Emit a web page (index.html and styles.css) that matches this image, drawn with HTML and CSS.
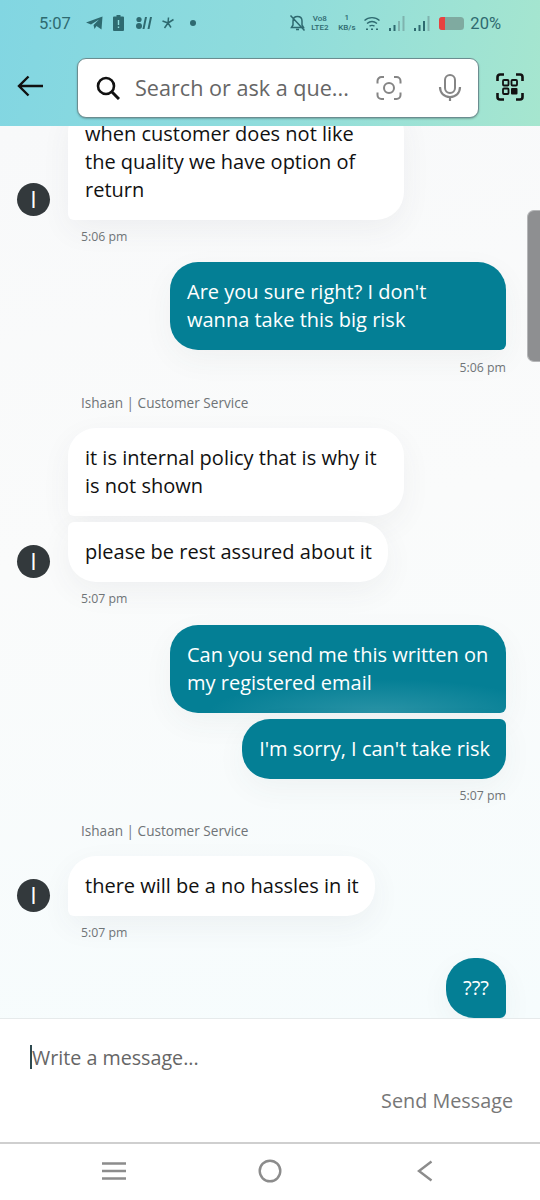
FILE: index.html
```html
<!DOCTYPE html>
<html lang="en">
<head>
<meta charset="utf-8">
<title>Customer Service Chat</title>
<link rel="stylesheet" href="styles.css">
</head>
<body>
<div class="app">
  <header class="top">
    <div class="status">
      <div class="status-left">
        <span class="clock">5:07</span>
        <svg class="ic-tg" width="17" height="14" viewBox="0 0 17 14"><path d="M0 6.500 16.500.5 15.500 13.500 10.500 10 8.500 13 7.500 9 13 3.500 5 8.500Z" fill="#2e6a70"/></svg>
        <svg class="ic-bat" width="11" height="16" viewBox="0 0 11 16"><path d="M3.500 0h4v1.500H10a1 1 0 0 1 1 1V15a1 1 0 0 1-1 1H1a1 1 0 0 1-1-1V2.500a1 1 0 0 1 1-1h2.500Z" fill="#2e6a70"/><path d="M4.800 5h1.400v5H4.800ZM4.800 11.500h1.400V13H4.800Z" fill="#8fdcdc"/></svg>
        <svg class="ic-sim" width="16" height="14" viewBox="0 0 16 14"><circle cx="3" cy="3.500" r="2.600" fill="#2e6a70"/><circle cx="3" cy="10" r="3" fill="#2e6a70"/><path d="M9 1h2L8.500 13h-2ZM14 1h2l-2.500 12h-2Z" fill="#2e6a70"/></svg>
        <svg class="ic-star" width="12" height="12" viewBox="0 0 12 12"><path d="M6 6 11.500 2.500M6 6 .5 4M6 6 2.500 11M6 6 9 10.500M6 6 6.500 .5" stroke="#2e6a70" stroke-width="1.500" fill="none"/></svg>
        <span class="dot"></span>
      </div>
      <div class="status-right">
        <svg class="ic-mute" width="17" height="16" viewBox="0 0 17 16"><path d="M8.500 1.500c-3 0-4.500 2-4.500 4.500v4L2.500 12.500h12L13 10V6c0-2.500-1.500-4.500-4.500-4.500ZM7 14.500h3M1.500.5l14 15" stroke="#2e6a70" stroke-width="1.500" fill="none"/></svg>
        <span class="tiny vo">Vo8<br>LTE2</span>
        <span class="tiny kb">1<br>KB/s</span>
        <svg class="ic-wifi" width="16" height="14" viewBox="0 0 16 14"><path d="M.5 4.500C4.500.7 11.500.7 15.500 4.500M3 7.500c3-2.500 7-2.500 10 0M5.500 10.200c1.500-1 3.500-1 5 0" stroke="#2e6a70" stroke-width="1.400" fill="none"/><path d="M2 12.500h2v1.500H2ZM7 12.500h2v1.500H7ZM12 12.500h2v1.500h-2Z" fill="#2e6a70"/></svg>
        <svg class="ic-sig" width="16" height="15" viewBox="0 0 16 15"><path d="M0 12h2v3H0ZM4.500 9h2v6h-2Z" fill="#2e6a70"/><path d="M9 5h2v10H9ZM13.500 0h2v15h-2Z" fill="#7fb3ae"/></svg>
        <svg class="ic-sig2" width="16" height="15" viewBox="0 0 16 15"><path d="M0 12h2v3H0ZM4.500 9h2v6h-2ZM9 5h2v10H9Z" fill="#2e6a70"/><path d="M13.500 0h2v15h-2Z" fill="#7fb3ae"/></svg>
        <svg class="ic-level" width="25" height="13" viewBox="0 0 25 13"><rect width="25" height="13" rx="3.500" fill="#7faaa0"/><path d="M3 0h3v13H3a3 3 0 0 1-3-3V3a3 3 0 0 1 3-3Z" fill="#e8413f"/></svg>
        <span class="percent">20%</span>
      </div>
    </div>
    <div class="searchbar">
      <svg class="ic-back" width="27" height="22" viewBox="0 0 27 22"><path d="M26 11H2M11.500 1.500 2 11l9.500 9.500" stroke="#111" stroke-width="2.400" fill="none"/></svg>
      <div class="search">
        <svg class="ic-search" width="24" height="24" viewBox="0 0 24 24"><circle cx="10" cy="10" r="8" stroke="#111" stroke-width="2.600" fill="none"/><path d="m16 16 7 7" stroke="#111" stroke-width="3" fill="none"/></svg>
        <span class="placeholder">Search or ask a que...</span>
        <svg class="ic-lens" width="26" height="26" viewBox="0 0 26 26"><path d="M8 2H5.500A4 4 0 0 0 1.500 6v2.500M18 2h2.500a4 4 0 0 1 4 4v2.500M8 24H5.500a4 4 0 0 1-4-4v-2.500M18 24h2.500a4 4 0 0 0 4-4v-2.500" stroke="#858585" stroke-width="2" fill="none"/><circle cx="13" cy="13" r="5" stroke="#858585" stroke-width="2" fill="none"/></svg>
        <svg class="ic-mic" width="24" height="28" viewBox="0 0 24 28"><rect x="7" y="1" width="10" height="18" rx="5" stroke="#858585" stroke-width="2" fill="none"/><path d="M2 13c0 6 4 10 10 10s10-4 10-10M12 23v4" stroke="#858585" stroke-width="2.200" fill="none"/></svg>
      </div>
      <svg class="ic-qr" width="28" height="28" viewBox="0 0 28 28"><path d="M1.500 8V4a2.500 2.500 0 0 1 2.500-2.500h4M20 1.500h4A2.500 2.500 0 0 1 26.500 4v4M1.500 20v4A2.500 2.500 0 0 0 4 26.500h4M20 26.500h4a2.500 2.500 0 0 0 2.500-2.500v-4" stroke="#111" stroke-width="2.600" fill="none"/><rect x="7" y="7" width="5.500" height="5.500" rx="1" stroke="#111" stroke-width="1.800" fill="none"/><rect x="15.500" y="7" width="5.500" height="5.500" rx="1" stroke="#111" stroke-width="1.800" fill="none"/><rect x="7" y="15.500" width="5.500" height="5.500" rx="1" stroke="#111" stroke-width="1.800" fill="none"/><rect x="15" y="15" width="6.500" height="6.500" rx="1" fill="#111"/></svg>
    </div>
  </header>

  <main class="chat">
    <div class="scrollthumb"></div>

    <div class="row">
      <span class="avatar">I</span>
      <div class="bubble in first wide">when customer does not like<br>the quality we have option of<br>return</div>
    </div>
    <div class="time in-time t1">5:06 pm</div>

    <div class="bubble out first wide gap-18">Are you sure right? I don't<br>wanna take this big risk</div>
    <div class="time out-time t2">5:06 pm</div>

    <div class="name">Ishaan | Customer Service</div>
    <div class="row indent">
      <div class="bubble in first wide">it is internal policy that is why it<br>is not shown</div>
    </div>
    <div class="row stack">
      <span class="avatar">I</span>
      <div class="bubble in last">please be rest assured about it</div>
    </div>
    <div class="time in-time t1">5:07 pm</div>

    <div class="bubble out first wide glow gap-19">Can you send me this written on<br>my registered email</div>
    <div class="bubble out last stack">I'm sorry, I can't take risk</div>
    <div class="time out-time t1">5:07 pm</div>

    <div class="name">Ishaan | Customer Service</div>
    <div class="row">
      <span class="avatar">I</span>
      <div class="bubble in first">there will be a no hassles in it</div>
    </div>
    <div class="time in-time t1">5:07 pm</div>

    <div class="bubble out first gap-18 short">???</div>
  </main>

  <section class="composer">
    <div class="input"><span class="caret"></span><span class="hint">Write a message...</span></div>
    <div class="send">Send Message</div>
  </section>

  <nav class="nav">
    <svg width="26" height="20" viewBox="0 0 26 20"><path d="M1 2.500h24M1 10h24M1 17.500h24" stroke="#8c8c8c" stroke-width="2.600" fill="none"/></svg>
    <svg class="ic-home" width="24" height="24" viewBox="0 0 24 24"><circle cx="12" cy="12" r="10.300" stroke="#8c8c8c" stroke-width="2.400" fill="none"/></svg>
    <svg width="16" height="22" viewBox="0 0 16 22"><path d="M14.500 1.500 2 11l12.500 9.500" stroke="#8c8c8c" stroke-width="2.400" fill="none"/></svg>
  </nav>
</div>
</body>
</html>
```
FILE: styles.css
```css
* { box-sizing: border-box; }
html, body { margin: 0; padding: 0; }
body { font-family: "Open Sans", "Noto Sans", sans-serif; background: #fff; }
.app { width: 540px; height: 1200px; display: flex; flex-direction: column; overflow: hidden; }

.top { height: 126px; flex: none; background: linear-gradient(100deg, #82d6e2 0%, #8fdcdc 50%, #a6e6cf 100%); display: flex; flex-direction: column; }
.status { height: 59px; display: flex; justify-content: space-between; padding: 14px 39px 0 39px; color: #2e6a70; }
.status-left, .status-right { display: flex; align-items: center; height: 18px; }
.clock { font-family: "Roboto", sans-serif; font-size: 16.500px; width: 32px; margin-right: 15px; }
.ic-bat { margin-left: 10px; }
.ic-sim { margin-left: 12px; }
.ic-star { margin-left: 10px; }
.dot { width: 6px; height: 6px; border-radius: 50%; background: #2e6a70; margin-left: 16px; }
.ic-mute { margin-right: 4px; }
.tiny { font-family: "Roboto", sans-serif; font-size: 8px; line-height: 9px; font-weight: 500; text-align: center; }
.vo { width: 19px; }
.kb { width: 21px; margin-left: 7px; line-height: 10px; }
.ic-wifi { margin-left: 7px; }
.ic-sig { margin-left: 9px; }
.ic-sig2 { margin-left: 9px; }
.ic-level { margin-left: 9px; }
.percent { font-family: "Roboto", sans-serif; font-size: 16.500px; margin-left: 6px; }

.searchbar { display: flex; align-items: center; padding-left: 17px; height: 59px; }
.ic-back { flex: none; margin-right: 34px; margin-top: -5px; }
.search { width: 402px; height: 60px; margin: -1px 0 0 -1px; background: #fff; border: 1px solid #6b8d90; border-radius: 9px; display: flex; align-items: center; padding-left: 18px; box-shadow: 0 1px 2px rgba(0,0,0,.25); }
.placeholder { font-size: 21.600px; color: #666; width: 241px; margin-left: 15px; padding-bottom: 2px; white-space: nowrap; }
.ic-search { flex: none; }
.ic-lens { flex: none; }
.ic-mic { flex: none; margin-left: 36px; }
.ic-qr { flex: none; margin-left: 17px; margin-top: -3px; }

.chat { position: relative; height: 892px; flex: none; overflow: hidden; display: flex; flex-direction: column; justify-content: flex-end; background: linear-gradient(170deg, #f8f9fa 0%, #fafbfb 45%, #f6fcfd 100%); }
.scrollthumb { position: absolute; top: 84px; right: 0; width: 13px; height: 152px; background: #8e8f91; border: 1px solid #b5b6b8; border-right: 0; border-radius: 7px 0 0 7px; }

.row { display: flex; align-items: flex-end; padding-left: 17px; flex: none; }
.row.indent { padding-left: 68px; }
.avatar { width: 33px; height: 33px; flex: none; border-radius: 50%; background: #33393c; color: #fff; font-size: 23px; line-height: 33px; text-align: center; margin: 0 18px 4px 0; }
.bubble { flex: none; font-size: 20px; line-height: 28px; padding: 16px 16px 16px 17px; white-space: nowrap; }
.bubble.in { background: #fff; color: #111; box-shadow: 0 10px 30px rgba(60,70,80,.06); }
.bubble.in.first { border-radius: 28px 28px 28px 6px; }
.bubble.in.last { border-radius: 6px 28px 28px 28px; }
.bubble.out { align-self: flex-end; margin-right: 34px; background: #047f95; color: #fff; box-shadow: 0 10px 30px rgba(60,70,80,.05); }
.bubble.out.first { border-radius: 28px 28px 6px 28px; }
.bubble.out.last { border-radius: 28px 6px 24px 28px; }
.bubble.wide { width: 336px; }
.bubble.glow { background: radial-gradient(ellipse 170px 34px at 62% 100%, #2a93a6 0%, #047f95 100%); }
.bubble.short { width: 60px; height: 60px; padding: 16px 0; text-align: center; }
.stack { margin-top: 6px; }
.gap-18 { margin-top: 18px; }
.gap-19 { margin-top: 19px; }

.time { flex: none; font-size: 12.300px; line-height: 14px; padding-top: 2px; color: #6f7477; }
.in-time { padding-left: 81px; }
.out-time { align-self: flex-end; margin-right: 34px; }
.t1 { margin-top: 8px; }
.t2 { margin-top: 9px; }
.name { flex: none; font-size: 13.600px; line-height: 16px; color: #6f7477; padding-left: 81px; margin-top: 20px; margin-bottom: 17px; }

.composer { height: 126px; flex: none; background: #fff; border-top: 1px solid #e6eaeb; border-bottom: 2px solid #cfcfcf; display: flex; flex-direction: column; padding: 25px 27px 0 30px; }
.input { display: flex; align-items: center; height: 26px; }
.caret { width: 2px; height: 24px; background: #2e4a50; flex: none; }
.hint { font-size: 19.700px; color: #666; white-space: nowrap; }
.send { align-self: flex-end; margin-top: 17px; font-size: 19.800px; line-height: 28px; color: #777; }

.nav { flex: 1; background: #fff; display: flex; align-items: center; justify-content: space-between; padding: 0 107px 3px 101px; }
.ic-home { margin-left: -4px; }
```
